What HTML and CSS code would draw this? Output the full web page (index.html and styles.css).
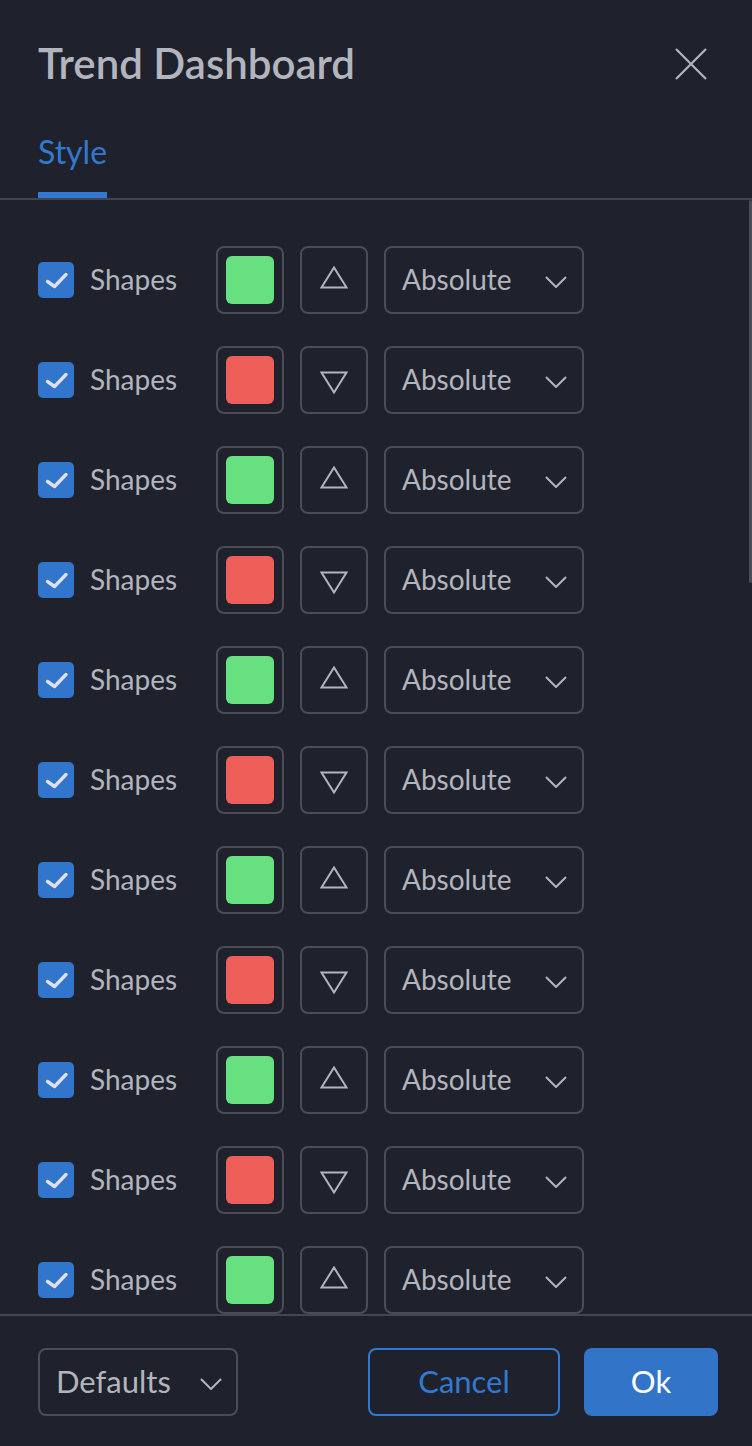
FILE: index.html
```html
<!DOCTYPE html>
<html lang="en">
<head>
<meta charset="utf-8">
<title>Trend Dashboard</title>
<link rel="stylesheet" href="styles.css">
</head>
<body>
<div class="dialog">
  <header class="head">
    <h1 class="title">Trend Dashboard</h1>
    <button class="close" aria-label="Close">
      <svg width="32" height="32" viewBox="0 0 32 32"><path d="M1 1L31 31M31 1L1 31" stroke="#b2b5be" stroke-width="2.2" fill="none"/></svg>
    </button>
  </header>
  <nav class="tabs"><span class="tab">Style</span></nav>
  <div class="body">
    <div class="list">
      <div class="row">
        <span class="check"><svg width="36" height="36" viewBox="0 0 36 36"><polyline points="9.5,19.5 16.5,24.5 28,12.5" fill="none" stroke="#dfe1e6" stroke-width="3.4" stroke-linecap="round" stroke-linejoin="round"/></svg></span>
        <span class="label">Shapes</span>
        <span class="box"><span class="swatch green"></span></span>
        <span class="box"><svg class="tri up" width="28" height="23" viewBox="0 0 28 23"><polygon points="1.5,21.5 14,1.5 26.5,21.5" fill="none" stroke="#b2b5be" stroke-width="2"/></svg></span>
        <span class="select"><span>Absolute</span><svg width="22" height="12" viewBox="0 0 22 12"><polyline points="1,1 11,11 21,1" fill="none" stroke="#b2b5be" stroke-width="2"/></svg></span>
      </div>
      <div class="row">
        <span class="check"><svg width="36" height="36" viewBox="0 0 36 36"><polyline points="9.5,19.5 16.5,24.5 28,12.5" fill="none" stroke="#dfe1e6" stroke-width="3.4" stroke-linecap="round" stroke-linejoin="round"/></svg></span>
        <span class="label">Shapes</span>
        <span class="box"><span class="swatch red"></span></span>
        <span class="box"><svg class="tri down" width="28" height="23" viewBox="0 0 28 23"><polygon points="1.5,1.5 26.5,1.5 14,21.5" fill="none" stroke="#b2b5be" stroke-width="2"/></svg></span>
        <span class="select"><span>Absolute</span><svg width="22" height="12" viewBox="0 0 22 12"><polyline points="1,1 11,11 21,1" fill="none" stroke="#b2b5be" stroke-width="2"/></svg></span>
      </div>
      <div class="row">
        <span class="check"><svg width="36" height="36" viewBox="0 0 36 36"><polyline points="9.5,19.5 16.5,24.5 28,12.5" fill="none" stroke="#dfe1e6" stroke-width="3.4" stroke-linecap="round" stroke-linejoin="round"/></svg></span>
        <span class="label">Shapes</span>
        <span class="box"><span class="swatch green"></span></span>
        <span class="box"><svg class="tri up" width="28" height="23" viewBox="0 0 28 23"><polygon points="1.5,21.5 14,1.5 26.5,21.5" fill="none" stroke="#b2b5be" stroke-width="2"/></svg></span>
        <span class="select"><span>Absolute</span><svg width="22" height="12" viewBox="0 0 22 12"><polyline points="1,1 11,11 21,1" fill="none" stroke="#b2b5be" stroke-width="2"/></svg></span>
      </div>
      <div class="row">
        <span class="check"><svg width="36" height="36" viewBox="0 0 36 36"><polyline points="9.5,19.5 16.5,24.5 28,12.5" fill="none" stroke="#dfe1e6" stroke-width="3.4" stroke-linecap="round" stroke-linejoin="round"/></svg></span>
        <span class="label">Shapes</span>
        <span class="box"><span class="swatch red"></span></span>
        <span class="box"><svg class="tri down" width="28" height="23" viewBox="0 0 28 23"><polygon points="1.5,1.5 26.5,1.5 14,21.5" fill="none" stroke="#b2b5be" stroke-width="2"/></svg></span>
        <span class="select"><span>Absolute</span><svg width="22" height="12" viewBox="0 0 22 12"><polyline points="1,1 11,11 21,1" fill="none" stroke="#b2b5be" stroke-width="2"/></svg></span>
      </div>
      <div class="row">
        <span class="check"><svg width="36" height="36" viewBox="0 0 36 36"><polyline points="9.5,19.5 16.5,24.5 28,12.5" fill="none" stroke="#dfe1e6" stroke-width="3.4" stroke-linecap="round" stroke-linejoin="round"/></svg></span>
        <span class="label">Shapes</span>
        <span class="box"><span class="swatch green"></span></span>
        <span class="box"><svg class="tri up" width="28" height="23" viewBox="0 0 28 23"><polygon points="1.5,21.5 14,1.5 26.5,21.5" fill="none" stroke="#b2b5be" stroke-width="2"/></svg></span>
        <span class="select"><span>Absolute</span><svg width="22" height="12" viewBox="0 0 22 12"><polyline points="1,1 11,11 21,1" fill="none" stroke="#b2b5be" stroke-width="2"/></svg></span>
      </div>
      <div class="row">
        <span class="check"><svg width="36" height="36" viewBox="0 0 36 36"><polyline points="9.5,19.5 16.5,24.5 28,12.5" fill="none" stroke="#dfe1e6" stroke-width="3.4" stroke-linecap="round" stroke-linejoin="round"/></svg></span>
        <span class="label">Shapes</span>
        <span class="box"><span class="swatch red"></span></span>
        <span class="box"><svg class="tri down" width="28" height="23" viewBox="0 0 28 23"><polygon points="1.5,1.5 26.5,1.5 14,21.5" fill="none" stroke="#b2b5be" stroke-width="2"/></svg></span>
        <span class="select"><span>Absolute</span><svg width="22" height="12" viewBox="0 0 22 12"><polyline points="1,1 11,11 21,1" fill="none" stroke="#b2b5be" stroke-width="2"/></svg></span>
      </div>
      <div class="row">
        <span class="check"><svg width="36" height="36" viewBox="0 0 36 36"><polyline points="9.5,19.5 16.5,24.5 28,12.5" fill="none" stroke="#dfe1e6" stroke-width="3.4" stroke-linecap="round" stroke-linejoin="round"/></svg></span>
        <span class="label">Shapes</span>
        <span class="box"><span class="swatch green"></span></span>
        <span class="box"><svg class="tri up" width="28" height="23" viewBox="0 0 28 23"><polygon points="1.5,21.5 14,1.5 26.5,21.5" fill="none" stroke="#b2b5be" stroke-width="2"/></svg></span>
        <span class="select"><span>Absolute</span><svg width="22" height="12" viewBox="0 0 22 12"><polyline points="1,1 11,11 21,1" fill="none" stroke="#b2b5be" stroke-width="2"/></svg></span>
      </div>
      <div class="row">
        <span class="check"><svg width="36" height="36" viewBox="0 0 36 36"><polyline points="9.5,19.5 16.5,24.5 28,12.5" fill="none" stroke="#dfe1e6" stroke-width="3.4" stroke-linecap="round" stroke-linejoin="round"/></svg></span>
        <span class="label">Shapes</span>
        <span class="box"><span class="swatch red"></span></span>
        <span class="box"><svg class="tri down" width="28" height="23" viewBox="0 0 28 23"><polygon points="1.5,1.5 26.5,1.5 14,21.5" fill="none" stroke="#b2b5be" stroke-width="2"/></svg></span>
        <span class="select"><span>Absolute</span><svg width="22" height="12" viewBox="0 0 22 12"><polyline points="1,1 11,11 21,1" fill="none" stroke="#b2b5be" stroke-width="2"/></svg></span>
      </div>
      <div class="row">
        <span class="check"><svg width="36" height="36" viewBox="0 0 36 36"><polyline points="9.5,19.5 16.5,24.5 28,12.5" fill="none" stroke="#dfe1e6" stroke-width="3.4" stroke-linecap="round" stroke-linejoin="round"/></svg></span>
        <span class="label">Shapes</span>
        <span class="box"><span class="swatch green"></span></span>
        <span class="box"><svg class="tri up" width="28" height="23" viewBox="0 0 28 23"><polygon points="1.5,21.5 14,1.5 26.5,21.5" fill="none" stroke="#b2b5be" stroke-width="2"/></svg></span>
        <span class="select"><span>Absolute</span><svg width="22" height="12" viewBox="0 0 22 12"><polyline points="1,1 11,11 21,1" fill="none" stroke="#b2b5be" stroke-width="2"/></svg></span>
      </div>
      <div class="row">
        <span class="check"><svg width="36" height="36" viewBox="0 0 36 36"><polyline points="9.5,19.5 16.5,24.5 28,12.5" fill="none" stroke="#dfe1e6" stroke-width="3.4" stroke-linecap="round" stroke-linejoin="round"/></svg></span>
        <span class="label">Shapes</span>
        <span class="box"><span class="swatch red"></span></span>
        <span class="box"><svg class="tri down" width="28" height="23" viewBox="0 0 28 23"><polygon points="1.5,1.5 26.5,1.5 14,21.5" fill="none" stroke="#b2b5be" stroke-width="2"/></svg></span>
        <span class="select"><span>Absolute</span><svg width="22" height="12" viewBox="0 0 22 12"><polyline points="1,1 11,11 21,1" fill="none" stroke="#b2b5be" stroke-width="2"/></svg></span>
      </div>
      <div class="row">
        <span class="check"><svg width="36" height="36" viewBox="0 0 36 36"><polyline points="9.5,19.5 16.5,24.5 28,12.5" fill="none" stroke="#dfe1e6" stroke-width="3.4" stroke-linecap="round" stroke-linejoin="round"/></svg></span>
        <span class="label">Shapes</span>
        <span class="box"><span class="swatch green"></span></span>
        <span class="box"><svg class="tri up" width="28" height="23" viewBox="0 0 28 23"><polygon points="1.5,21.5 14,1.5 26.5,21.5" fill="none" stroke="#b2b5be" stroke-width="2"/></svg></span>
        <span class="select"><span>Absolute</span><svg width="22" height="12" viewBox="0 0 22 12"><polyline points="1,1 11,11 21,1" fill="none" stroke="#b2b5be" stroke-width="2"/></svg></span>
      </div>
      <div class="row">
        <span class="check"><svg width="36" height="36" viewBox="0 0 36 36"><polyline points="9.5,19.5 16.5,24.5 28,12.5" fill="none" stroke="#dfe1e6" stroke-width="3.4" stroke-linecap="round" stroke-linejoin="round"/></svg></span>
        <span class="label">Shapes</span>
        <span class="box"><span class="swatch red"></span></span>
        <span class="box"><svg class="tri down" width="28" height="23" viewBox="0 0 28 23"><polygon points="1.5,1.5 26.5,1.5 14,21.5" fill="none" stroke="#b2b5be" stroke-width="2"/></svg></span>
        <span class="select"><span>Absolute</span><svg width="22" height="12" viewBox="0 0 22 12"><polyline points="1,1 11,11 21,1" fill="none" stroke="#b2b5be" stroke-width="2"/></svg></span>
      </div>
    </div>
    <div class="thumb"></div>
  </div>
  <footer class="foot">
    <div class="defaults"><span class="dtext">Defaults</span><svg width="22" height="12" viewBox="0 0 22 12"><polyline points="1,1 11,11 21,1" fill="none" stroke="#b2b5be" stroke-width="2"/></svg></div>
    <div class="actions">
      <div class="btn cancel"><span>Cancel</span></div>
      <div class="btn ok"><span>Ok</span></div>
    </div>
  </footer>
</div>
</body>
</html>
```

FILE: styles.css
```css
* { box-sizing: border-box; }
html, body { margin: 0; padding: 0; }
body {
  background: #1f212c;
  font-family: Lato, "Noto Sans", sans-serif;
  color: #b2b5be;
}
.dialog {
  width: 752px;
  height: 1446px;
  display: flex;
  flex-direction: column;
  background: #1f212c;
}
.head {
  height: 128px;
  flex-shrink: 0;
  display: flex;
  align-items: center;
  justify-content: space-between;
  padding: 0 45px 0 38px;
}
.title {
  margin: 0;
  font-size: 42px;
  line-height: 50px;
  font-weight: 600;
  color: #b2b5be;
  position: relative;
  top: -1px;
}
.close {
  background: none;
  border: 0;
  padding: 0;
  width: 32px;
  height: 32px;
  display: block;
}
.close svg { display: block; }
.tabs {
  height: 72px;
  flex-shrink: 0;
  display: flex;
  align-items: flex-end;
  padding-left: 38px;
  border-bottom: 2px solid #434651;
}
.tab {
  font-size: 32px;
  line-height: 38px;
  color: #3179d1;
  padding-bottom: 21px;
  border-bottom: 6px solid #3179d1;
}
.body {
  flex: 1;
  position: relative;
  overflow: hidden;
}
.list {
  height: 100%;
  overflow: hidden;
  padding: 46px 0 0 38px;
  display: flex;
  flex-direction: column;
  gap: 32px;
}
.row {
  flex-shrink: 0;
  height: 68px;
  display: flex;
  align-items: center;
}
.check {
  width: 36px;
  height: 36px;
  border-radius: 5px;
  background: #3175cd;
  display: block;
}
.check svg { display: block; }
.label {
  font-size: 28px;
  line-height: 1.2;
  margin-left: 16px;
  width: 126px;
}
.box {
  width: 68px;
  height: 68px;
  border: 2px solid #4a4d59;
  border-radius: 8px;
  display: flex;
  align-items: center;
  justify-content: center;
  margin-right: 16px;
}
.swatch {
  width: 48px;
  height: 48px;
  border-radius: 6px;
  display: block;
}
.swatch.green { background: #67e07f; }
.swatch.red { background: #ef5f5a; }
.tri { display: block; }
.tri.up { margin-bottom: 6px; }
.tri.down { margin-top: 5px; }
.select {
  width: 200px;
  height: 68px;
  border: 2px solid #4a4d59;
  border-radius: 8px;
  display: flex;
  align-items: center;
  justify-content: space-between;
  padding: 0 15px 0 16px;
  font-size: 28px;
  line-height: 1.2;
}
.select svg { display: block; margin-top: 3px; }
.thumb {
  position: absolute;
  right: 0;
  top: 0;
  width: 3px;
  height: 383px;
  border-radius: 2px;
  background: #4a4d59;
}
.foot {
  flex-shrink: 0;
  border-top: 2px solid #434651;
  padding: 32px 34px 30px 38px;
  display: flex;
  align-items: center;
  justify-content: space-between;
}
.defaults {
  width: 200px;
  height: 68px;
  border: 2px solid #4a4d59;
  border-radius: 8px;
  display: flex;
  align-items: center;
  justify-content: space-between;
  padding: 0 14px 0 16px;
  font-size: 31px;
  line-height: 1.2;
}
.dtext { white-space: nowrap; }
.defaults svg { display: block; margin-top: 3px; flex-shrink: 0; }
.actions {
  display: flex;
  gap: 24px;
}
.btn {
  height: 68px;
  border-radius: 8px;
  font-size: 31px;
  line-height: 1.2;
  display: flex;
  align-items: center;
  justify-content: center;
  white-space: nowrap;
}
.cancel {
  width: 192px;
  border: 2px solid #3179d1;
  color: #3179d1;
}
.ok {
  width: 134px;
  background: #3275c8;
  color: #ffffff;
}
```
